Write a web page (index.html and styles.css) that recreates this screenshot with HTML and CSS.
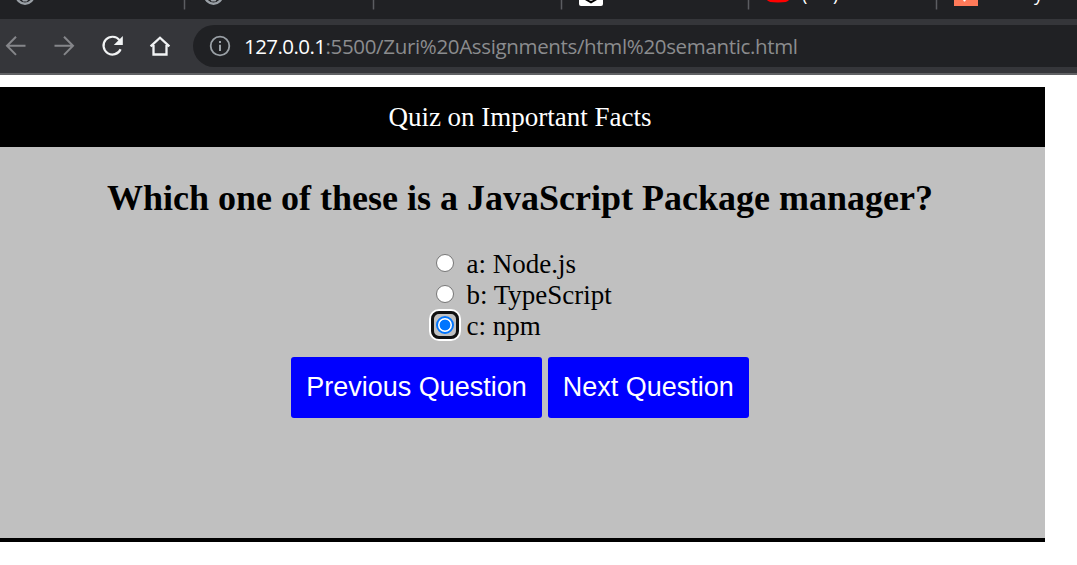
FILE: index.html
```html
<!DOCTYPE html>
<html lang="en">
<head>
<meta charset="utf-8">
<title>Quiz on Important Facts</title>
<link rel="stylesheet" href="styles.css">
</head>
<body>
<div class="browser">
  <div class="tabs">
    <svg class="tabs-art" width="1077" height="19" viewBox="0 0 1077 19">
      <g fill="none" stroke="#9aa0a6" stroke-width="2.4">
        <circle cx="25" cy="-5" r="8.700"/>
        <circle cx="213.500" cy="-5" r="8.700"/>
      </g>
      <path d="M22 0h6l-1 1.500h-4zM210.500 0h6l-1 1.500h-4z" fill="#9aa0a6"/>
      <path d="M184.500 0v9.500M373.500 0v9.500M561.500 0v9.500M748.500 0v9.500M936.500 0v9.500" stroke="#5b5d61" stroke-width="1.500"/>
      <path d="M579 0h24v4q0 2-2 2h-20q-2 0-2-2z" fill="#fff"/>
      <path d="M585 0h12l-6 3.600z" fill="#000"/><path d="M589.500 0h3v.7h-3z" fill="#fff"/>
      <path d="M767 0h22q-1 2.500-11 2.500t-11-2.500z" fill="#f00"/>
      <path d="M954 0h24v6h-24z" fill="#ff7a59"/>
      <path d="M963 0h3l-1 1.500h-1z" fill="#fff"/>
    </svg>
    <span class="tab-text tab-open">(</span>
    <span class="tab-text tab-close">)</span>
    <span class="tab-text tab-y">y</span>
  </div>
  <div class="toolbar">
    <svg class="nav" width="193" height="54" viewBox="0 19 193 54" fill="none">
      <path d="M25.500 45.800H7.500M16 36.700L7 45.800L16 54.900" stroke="#85868a" stroke-width="2"/>
      <path d="M54.500 45.800H72.500M64 36.700L73 45.800L64 54.900" stroke="#85868a" stroke-width="2"/>
      <path d="M119.500 40.200A8.900 8.900 0 1 0 120.600 49.200" stroke="#f1f3f4" stroke-width="2.200"/>
      <path d="M122.800 36v9h-9z" fill="#f1f3f4"/>
      <path d="M153.500 45v9.500h13V45M150.600 46.300L160 37.700L169.400 46.300" stroke="#f1f3f4" stroke-width="2.300"/>
    </svg>
    <div class="address">
      <svg width="22" height="22" viewBox="0 0 22 22" fill="none" stroke="#9aa0a6">
        <circle cx="11" cy="11" r="9.300" stroke-width="1.800"/>
        <path d="M11 9.800v6.200M11 6v2.100" stroke-width="2"/>
      </svg>
      <div class="url"><span class="host">127.0.0.1</span><span class="path">:5500/Zuri%20Assignments/html%20semantic.html</span></div>
    </div>
  </div>
</div>
<main class="quiz">
  <header class="quiz-title">Quiz on Important Facts</header>
  <section class="quiz-body">
    <h1 class="question">Which one of these is a JavaScript Package manager?</h1>
    <div class="options">
      <label class="option"><input class="radio" type="radio" name="answer">a: Node.js</label>
      <label class="option"><input class="radio" type="radio" name="answer">b: TypeScript</label>
      <label class="option"><input class="radio focused" type="radio" name="answer" checked>c: npm</label>
    </div>
    <div class="actions">
      <button class="button" type="button">Previous Question</button>
      <button class="button" type="button">Next Question</button>
    </div>
  </section>
</main>
</body>
</html>
```
FILE: styles.css
```css
* { box-sizing: border-box; }
body {
  margin: 0;
  background: #fff;
  overflow: hidden;
  font-family: "Liberation Serif", "Times New Roman", serif;
}
.browser { height: 75px; }
.tabs {
  position: relative;
  height: 19px;
  background: #202124;
  overflow: hidden;
}
.tabs-art { display: block; }
.tab-text {
  position: absolute;
  top: -18px;
  color: #fff;
  font: 18px/24px "Open Sans", sans-serif;
}
.tab-open { left: 802px; }
.tab-close { left: 833px; }
.tab-y { left: 1034px; }
.toolbar {
  display: flex;
  height: 56px;
  background: #35363a;
  border-bottom: 2px solid #606164;
}
.nav { flex: none; }
.address {
  flex: 1;
  display: flex;
  align-items: center;
  gap: 13px;
  height: 42px;
  margin-top: 6px;
  padding-left: 16px;
  background: #202124;
  border-radius: 21px 0 0 21px;
}
.url {
  font: 20.5px/28px "Open Sans", "Segoe UI", sans-serif;
  white-space: nowrap;
}
.host { color: #fff; letter-spacing: -0.55px; }
.path { color: #8b8c8e; letter-spacing: -0.34px; }
.quiz {
  width: 1045px;
  height: 455px;
  margin-top: 12px;
  background: silver;
  border-bottom: 4px solid #000;
}
.quiz-title {
  height: 60px;
  padding: 15px 5px 0 0;
  background: #000;
  color: #fff;
  font-size: 27px;
  line-height: 31px;
  text-align: center;
}
.quiz-body {
  display: flex;
  flex-direction: column;
  align-items: center;
  padding: 30px 5px 0 0;
}
.question {
  margin: 0;
  font-size: 36px;
  line-height: 42px;
  white-space: nowrap;
}
.options {
  width: 168px;
  margin: 30px 0 0;
  font-size: 27px;
}
.option {
  display: flex;
  align-items: center;
  gap: 12.5px;
  height: 31px;
  white-space: nowrap;
}
.radio {
  appearance: none;
  flex: none;
  width: 18px;
  height: 18px;
  margin: -4px 0 0;
  border: 1.5px solid #767676;
  border-radius: 50%;
  background: #fff;
}
.radio:checked {
  border: 2px solid #0075ff;
  background: radial-gradient(circle, #0075ff 5px, #fff 5.8px);
}
.focused {
  position: relative;
  outline: none;
}
.focused::after {
  content: "";
  position: absolute;
  inset: -7px;
  border: 3px solid #101010;
  border-radius: 8px;
  box-shadow: 0 0 0 2px #fff;
}
.actions {
  display: flex;
  gap: 6px;
  margin-top: 15px;
}
.button {
  height: 61px;
  padding: 0 15px;
  border: 0;
  border-radius: 3px;
  background: blue;
  color: #fff;
  font: 27px/31px "Liberation Sans", Arial, sans-serif;
  white-space: nowrap;
}
```
